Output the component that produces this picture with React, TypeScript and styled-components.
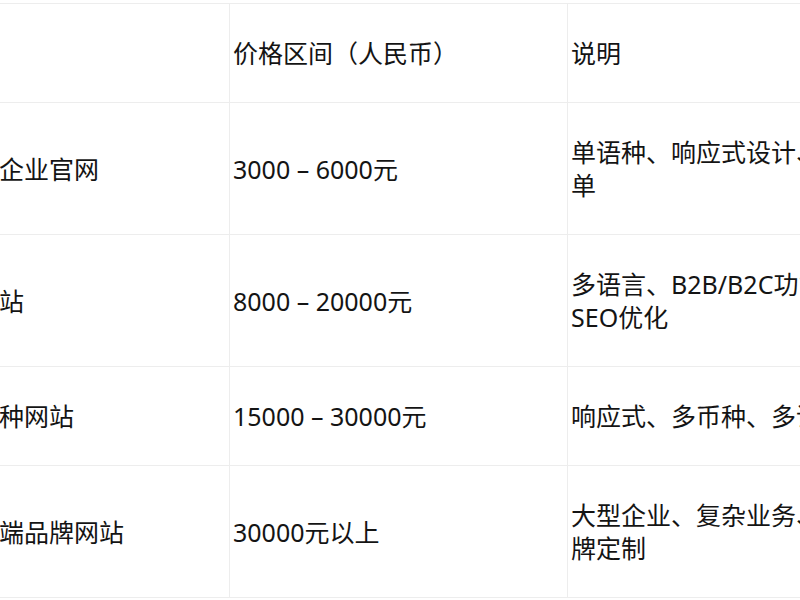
import styled, { createGlobalStyle } from "styled-components";

const GlobalStyle = createGlobalStyle`
  html, body {
    margin: 0;
    padding: 0;
    background: #ffffff;
  }
  body {
    font-family: "Noto Sans", "Noto Sans CJK SC", sans-serif;
    color: #141414;
  }
`;

const Viewport = styled.div`
  width: 800px;
  height: 600px;
  overflow: hidden;
  padding-top: 3px;
  box-sizing: border-box;
`;

const Table = styled.table`
  margin-left: -55px;
  width: 922px;
  table-layout: fixed;
  border-collapse: collapse;
  font-size: 25px;
  line-height: 33px;
`;

const Cell = styled.td`
  padding: 33px 3px 32px;
  border: 1px solid #ededed;
  vertical-align: middle;
  text-align: left;
  font-weight: 400;
`;

const HeadCell = styled(Cell).attrs({ as: "th" })``;

interface IRow {
  type: string;
  price: string;
  note: string;
}

const rows: IRow[] = [
  { type: "中小企业官网", price: "3000 – 6000元", note: "单语种、响应式设计、简单" },
  { type: "外贸站", price: "8000 – 20000元", note: "多语言、B2B/B2C功能、SEO优化" },
  { type: "多语种网站", price: "15000 – 30000元", note: "响应式、多币种、多语言" },
  { type: "中高端品牌网站", price: "30000元以上", note: "大型企业、复杂业务、品牌定制" },
];

function App() {
  return (
    <Viewport>
      <GlobalStyle />
      <Table>
        <colgroup>
          <col style={{ width: 284 }} />
          <col style={{ width: 338 }} />
          <col style={{ width: 300 }} />
        </colgroup>
        <thead>
          <tr>
            <HeadCell>类型</HeadCell>
            <HeadCell>价格区间（人民币）</HeadCell>
            <HeadCell>说明</HeadCell>
          </tr>
        </thead>
        <tbody>
          {rows.map((row) => (
            <tr key={row.type}>
              <Cell>{row.type}</Cell>
              <Cell>{row.price}</Cell>
              <Cell>{row.note}</Cell>
            </tr>
          ))}
        </tbody>
      </Table>
    </Viewport>
  );
}

export default App;
